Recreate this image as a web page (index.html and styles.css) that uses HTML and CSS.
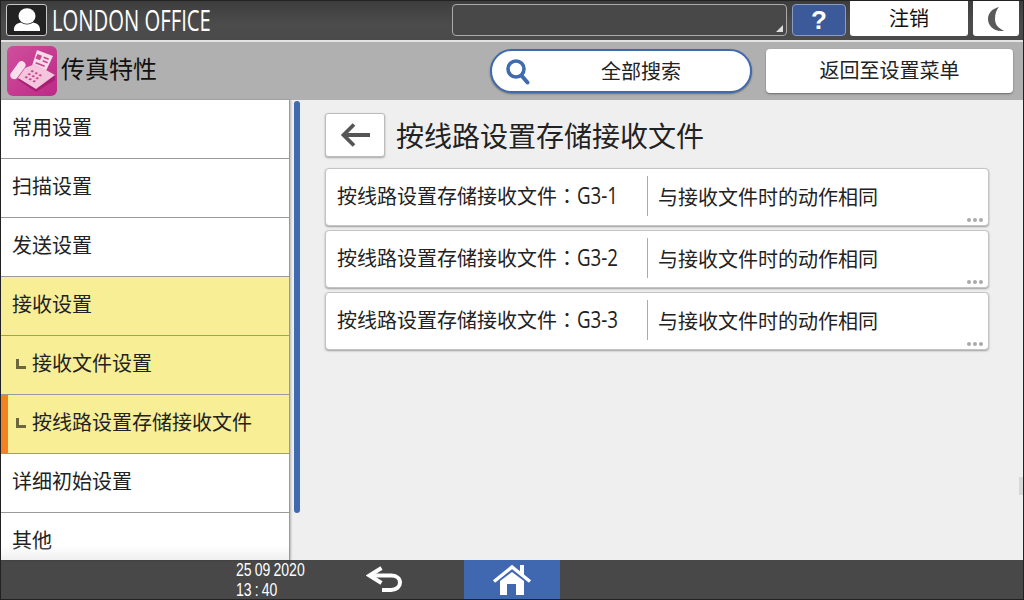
FILE: index.html
```html
<!DOCTYPE html>
<html lang="zh">
<head>
<meta charset="utf-8">
<title>传真特性</title>
<link rel="stylesheet" href="styles.css">
</head>
<body>
<div class="screen">
  <header class="topbar">
    <div class="user-btn">
      <svg width="28" height="24" viewBox="0 0 28 24"><ellipse cx="14" cy="8" rx="8.500" ry="7.800" fill="#fff"/><path d="M1 23c-.5-5 2-7.500 7-8.500 3 2.500 9 2.500 12 0 5 1 7.500 3.500 7 8.500z" fill="#fff"/></svg>
    </div>
    <div class="office"><span class="office-text">LONDON OFFICE</span></div>
    <div class="status-box"><span class="corner"></span></div>
    <div class="help">?</div>
    <div class="logout">注销</div>
    <div class="sleep">
      <svg width="18" height="26" viewBox="0 0 18 26"><path d="M12 1C5.500 2.500 1 7 1 13s5 12 13 12c1.500 0 3-.3 3-.3C11 22 8 18.500 8 13s1.500-9 4-12z" fill="#5a5a5a"/></svg>
    </div>
  </header>
  <div class="subbar">
    <div class="app-icon">
      <svg width="50" height="50" viewBox="0 0 50 50">
        <path d="M30 4l16 6-9 19-13-6z" fill="#f7dcea"/>
        <path d="M30.500 8l4.500 1.700-2 4.500-4.500-1.700zM37 10.500l5 1.900-.7 1.600-5-1.900zM36 14l5 1.900-.7 1.600-5-1.900zM29 16l9 3.400-.7 1.600-9-3.400z" fill="#c9478f"/>
        <path d="M11 34l7-11 10-4 20 11v4L29 46z" fill="#a81f74"/>
        <path d="M11 32l7-10 10-4 20 11-19 14z" fill="#f4c5dd"/>
        <path d="M4 27l8-11c2-1.500 4-1 5.500.5s1.500 3 .5 4.500l-8 11c-1.500 1.500-3.500 1.500-5 .5S2.500 29 4 27z" fill="#f9dfec"/>
        <path d="M25 24l2 1-1.500 1.500-2-1zM29 26l2 1-1.500 1.500-2-1zM33 28l2 1-1.500 1.500-2-1zM22 27l2 1-1.500 1.500-2-1zM26 29l2 1-1.500 1.500-2-1zM30 31l2 1-1.500 1.500-2-1zM19 30l2 1-1.500 1.500-2-1zM23 32l2 1-1.500 1.500-2-1zM27 34l2 1-1.500 1.500-2-1z" fill="#c9478f"/>
      </svg>
    </div>
    <div class="app-title">传真特性</div>
    <div class="search">
      <svg class="search-icon" width="26" height="28" viewBox="0 0 26 28"><circle cx="11" cy="11" r="8" fill="none" stroke="#3f6ab0" stroke-width="3.600"/><path d="M16.500 17.500l6 7" stroke="#3f6ab0" stroke-width="4" stroke-linecap="round"/></svg>
      <span class="search-text">全部搜索</span>
    </div>
    <div class="back-menu">返回至设置菜单</div>
  </div>
  <main class="main">
    <nav class="side">
      <div class="item">常用设置</div>
      <div class="item">扫描设置</div>
      <div class="item">发送设置</div>
      <div class="item on">接收设置</div>
      <div class="item on sub"><span class="ell"></span>接收文件设置</div>
      <div class="item on sub cur"><span class="ell"></span>按线路设置存储接收文件</div>
      <div class="item">详细初始设置</div>
      <div class="item">其他</div>
      <div class="fade"></div>
    </nav>
    <div class="scroll"><div class="thumb"></div></div>
    <section class="content">
      <div class="head">
        <div class="back-btn">
          <svg width="32" height="26" viewBox="0 0 32 26"><path d="M31 13H5M15 2.500L4.500 13 15 23.500" fill="none" stroke="#555" stroke-width="3.800"/></svg>
        </div>
        <h1 class="title">按线路设置存储接收文件</h1>
      </div>
      <div class="rows">
        <div class="row"><span class="label">按线路设置存储接收文件<span class="colon" lang="zh-Hant">：</span><span class="narrow">G3-1</span></span><span class="value">与接收文件时的动作相同</span><span class="dots"><i></i><i></i><i></i></span></div>
        <div class="row"><span class="label">按线路设置存储接收文件<span class="colon" lang="zh-Hant">：</span><span class="narrow">G3-2</span></span><span class="value">与接收文件时的动作相同</span><span class="dots"><i></i><i></i><i></i></span></div>
        <div class="row"><span class="label">按线路设置存储接收文件<span class="colon" lang="zh-Hant">：</span><span class="narrow">G3-3</span></span><span class="value">与接收文件时的动作相同</span><span class="dots"><i></i><i></i><i></i></span></div>
      </div>
    </section>
    <div class="edge-tab"></div>
  </main>
  <footer class="bottom">
    <div class="clock"><span class="clock-line">25 09 2020</span><span class="clock-line">13 : 40</span></div>
    <div class="undo">
      <svg width="38" height="28" viewBox="0 0 38 28"><path d="M15.500 2L3.500 9.500l12 7.500" fill="none" stroke="#fff" stroke-width="4"/><path d="M5 9.500h20c5.500 0 9 3 9 7s-3.500 7.500-9 7.500h-9" fill="none" stroke="#fff" stroke-width="4"/></svg>
    </div>
    <div class="home">
      <svg width="40" height="34" viewBox="0 0 40 34"><path d="M2 18.500L20 4l18 14.500" fill="none" stroke="#fff" stroke-width="3.400"/><path d="M28 2h4v11l-4-3.500z" fill="#fff"/><path fill-rule="evenodd" d="M8 18L20 9l12 9v14H8zM15 21v11h9V21z" fill="#fff"/></svg>
    </div>
  </footer>
</div>
</body>
</html>
```
FILE: styles.css
```css
* { box-sizing: border-box; }
html, body { margin: 0; padding: 0; }
body { font-family: "Noto Sans CJK SC", "Noto Sans", sans-serif; color: #222; overflow: hidden; }
.screen { width: 1024px; height: 600px; display: flex; flex-direction: column; background: #efefef; border-left: 1px solid #222; border-right: 1px solid #222; }

.topbar { height: 42px; flex: none; display: flex; align-items: flex-start; padding-left: 5px; background: linear-gradient(#3d3d3d, #4c4c4c 60%, #4a4a4a); border-top: 1px solid #222; border-bottom: 2px solid #e4e4e4; }
.user-btn { width: 41px; height: 32px; margin-top: 3px; border: 1px solid #c8c8c8; border-radius: 3px; background: #222; display: flex; align-items: center; justify-content: center; }
.office { width: 400px; margin-left: 5px; font-family: "Open Sans", sans-serif; font-size: 30px; line-height: 38px; color: #fff; white-space: nowrap; }
.office-text { display: inline-block; transform: scaleX(.675); transform-origin: left center; }
.status-box { position: relative; width: 335px; height: 32px; margin-top: 3px; border: 1px solid #aaa; border-radius: 4px; background: #484848; }
.corner { position: absolute; right: 3px; bottom: 3px; border-style: solid; border-width: 0 0 7px 7px; border-color: transparent transparent #ddd transparent; }
.help { width: 54px; height: 32px; margin: 3px 0 0 5px; border: 1px solid #8a9cc0; border-radius: 4px; background: #3c5a9a; color: #fff; font-family: "Liberation Sans", sans-serif; font-weight: 700; font-size: 26px; line-height: 30px; text-align: center; }
.logout { width: 118px; height: 35px; margin-left: 4px; border-radius: 0 0 3px 3px; background: #fff; color: #111; font-size: 20px; line-height: 34px; text-align: center; }
.sleep { width: 46px; height: 35px; margin-left: 5px; border-radius: 0 0 3px 3px; background: #fff; display: flex; align-items: center; justify-content: center; }

.subbar { height: 58px; flex: none; display: flex; align-items: flex-start; background: #b0b0b0; }
.app-icon { width: 50px; height: 50px; margin: 4px 0 0 6px; border-radius: 6px; background: linear-gradient(135deg, #cf4f9c, #bd2a87); }
.app-title { width: 429px; margin: 7px 0 0 4px; font-size: 24px; line-height: 38px; color: #111; }
.search { position: relative; width: 262px; height: 44px; margin-top: 7px; padding-bottom: 2px; display: flex; align-items: center; justify-content: center; border: 2px solid #3f6ab0; border-radius: 22px; background: #fff; box-shadow: 0 1px 2px rgba(0,0,0,.4); }
.search-icon { position: absolute; left: 13px; top: 7px; }
.search-text { font-size: 20px; color: #222; margin-left: 40px; }
.back-menu { width: 247px; height: 44px; margin: 7px 0 0 14px; border-radius: 4px; background: #fff; box-shadow: 0 1px 2px rgba(0,0,0,.4); font-size: 20px; line-height: 42px; text-align: center; color: #222; }

.main { position: relative; flex: 1; min-height: 0; display: flex; }
.side { position: relative; width: 289px; flex: none; overflow: hidden; background: #fff; border-right: 1px solid #999; box-shadow: 1px 0 2px rgba(0,0,0,.25); }
.item { height: 59px; padding: 0 0 6px 11px; display: flex; align-items: center; font-size: 20px; color: #222; border-bottom: 1px solid #9a9a9a; }
.item:last-child { border-bottom: 0; }
.item.on { background: #f8ee96; }
.sub { padding-left: 15px; }
.cur { box-shadow: inset 7px 0 0 #f58220; }
.ell { width: 10px; height: 10px; margin: 3px 6px 0 0; flex: none; border-left: 3px solid #6b6640; border-bottom: 3px solid #6b6640; }
.fade { position: absolute; left: 0; right: 0; bottom: 0; height: 14px; background: linear-gradient(rgba(239,239,239,0), #efefef); }
.scroll { width: 13px; flex: none; padding: 1px 0 0 4px; }
.thumb { width: 6px; height: 412px; border-radius: 3px; background: #3f6ab0; }
.content { flex: 1; padding: 13px 0 0 22px; }
.head { display: flex; align-items: center; height: 44px; }
.back-btn { width: 60px; height: 44px; border: 1px solid #bbb; border-radius: 3px; background: #fff; box-shadow: 0 1px 2px rgba(0,0,0,.3); display: flex; align-items: center; justify-content: center; }
.title { margin: 0 0 0 11px; font-size: 28px; font-weight: 400; line-height: 40px; color: #222; }
.rows { display: flex; flex-direction: column; gap: 4px; margin-top: 11px; width: 664px; }
.row { position: relative; height: 58px; display: flex; align-items: center; padding-bottom: 2px; border: 1px solid #c4c4c4; border-radius: 4px; background: #fff; box-shadow: 0 1px 2px rgba(0,0,0,.35); font-size: 20px; color: #222; }
.label { width: 322px; height: 40px; padding-left: 11px; line-height: 38px; border-right: 1px solid #aaa; white-space: nowrap; }
.colon { font-family: "Noto Sans CJK TC", sans-serif; }
.narrow { display: inline-block; font-family: "Open Sans", sans-serif; font-size: 24px; line-height: 38px; transform: scaleX(.78); transform-origin: left center; }
.value { padding-left: 10px; }
.dots { position: absolute; right: 5px; bottom: 3px; display: flex; gap: 2px; }
.dots i { width: 4px; height: 4px; border-radius: 50%; background: #aaa; }
.edge-tab { position: absolute; right: 0; top: 377px; width: 4px; height: 18px; background: #d8d8d8; }

.bottom { height: 40px; flex: none; display: flex; align-items: flex-start; background: #484848; border-bottom: 1px solid #222; }
.clock { width: 120px; margin-left: 235px; display: flex; flex-direction: column; font-family: "Liberation Sans", sans-serif; font-size: 18px; line-height: 20px; word-spacing: -1px; color: #fff; }
.clock-line { display: block; transform: scaleX(.78); transform-origin: left center; }
.undo { width: 98px; margin-left: 10px; height: 39px; display: flex; align-items: center; }
.home { width: 96px; height: 39px; background: #3f68b0; display: flex; align-items: center; justify-content: center; }
```
